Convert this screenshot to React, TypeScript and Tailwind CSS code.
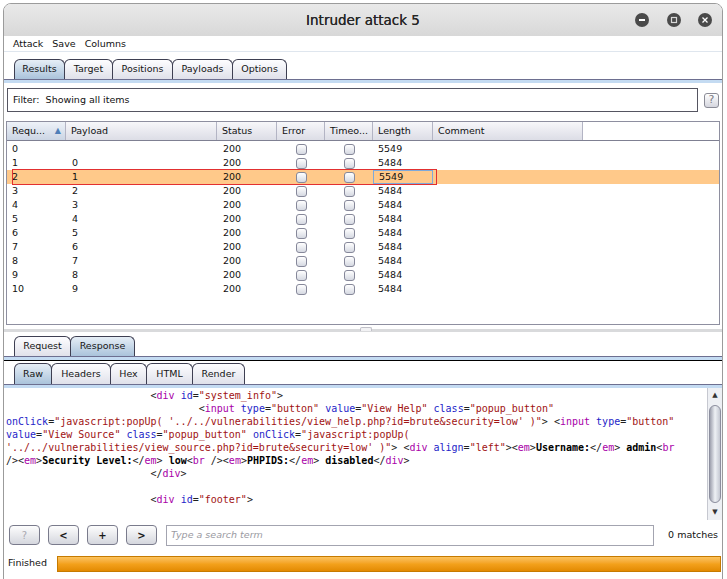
import React from 'react';

type Tok = { t: string; c: string };

const CODE = [
  '                        <div id="system_info">',
  '                                <input type="button" value="View Help" class="popup_button"',
  `onClick="javascript:popUp( '../../vulnerabilities/view_help.php?id=brute&security=low' )"> <input type="button"`,
  `value="View Source" class="popup_button" onClick="javascript:popUp(`,
  `'../../vulnerabilities/view_source.php?id=brute&security=low' )"> <div align="left"><em>Username:</em> admin<br`,
  `/><em>Security Level:</em> low<br /><em>PHPIDS:</em> disabled</div>`,
  '                        </div>',
  '',
  '                        <div id="footer">',
];

const tokColor: Record<string, string> = {
  punct: 'text-[#202020]',
  tag: 'text-[#a800a8]',
  attr: 'text-[#1e1ec8]',
  val: 'text-[#a01212]',
  bold: 'text-black font-bold',
  plain: '',
};

// tiny html colouriser, state carries over line breaks
function tokenize(lines: string[]): Tok[][] {
  let mode: 'text' | 'tagname' | 'attr' | 'value' = 'text';
  let quote = '';
  return lines.map((line) => {
    const out: Tok[] = [];
    const push = (ch: string, c: string) => {
      const last = out[out.length - 1];
      if (last && last.c === c) last.t += ch;
      else out.push({ t: ch, c });
    };
    for (const ch of line) {
      if (mode === 'value') {
        push(ch, 'val');
        if (ch === quote) mode = 'attr';
        continue;
      }
      if (ch === '<') {
        push(ch, 'punct');
        mode = 'tagname';
        continue;
      }
      if (mode === 'text') {
        push(ch, ch === ' ' ? 'plain' : 'bold');
        continue;
      }
      if (ch === '>') {
        push(ch, 'punct');
        mode = 'text';
        continue;
      }
      if (ch === '/') {
        push(ch, 'punct');
        continue;
      }
      if (mode === 'tagname') {
        if (ch === ' ') {
          push(ch, 'plain');
          mode = 'attr';
        } else push(ch, 'tag');
        continue;
      }
      if (ch === '=') {
        push(ch, 'punct');
        continue;
      }
      if (ch === '"' || ch === "'") {
        quote = ch;
        mode = 'value';
        push(ch, 'val');
        continue;
      }
      push(ch, ch === ' ' ? 'plain' : 'attr');
    }
    return out;
  });
}

type TabDef = { label: string; w: string };

const mainTabs: TabDef[] = [
  { label: 'Results', w: 'w-[51px]' },
  { label: 'Target', w: 'w-[49px]' },
  { label: 'Positions', w: 'w-[61px]' },
  { label: 'Payloads', w: 'w-[61px]' },
  { label: 'Options', w: 'w-[55px]' },
];
const msgTabs: TabDef[] = [
  { label: 'Request', w: 'w-[57px]' },
  { label: 'Response', w: 'w-[65px]' },
];
const viewTabs: TabDef[] = [
  { label: 'Raw', w: 'w-[38px]' },
  { label: 'Headers', w: 'w-[60px]' },
  { label: 'Hex', w: 'w-[37px]' },
  { label: 'HTML', w: 'w-[47px]' },
  { label: 'Render', w: 'w-[53px]' },
];

const Tabs = ({ tabs, active, h }: { tabs: TabDef[]; active: number; h: string }) => (
  <div className={`flex items-end pl-[10px] ${h}`}>
    {tabs.map((t, i) => (
      <div
        key={t.label}
        className={`${t.w} h-full -mr-px flex items-center justify-center border border-b-0 border-[#3e3f52] rounded-t-[6px] text-[9.5px] text-[#151515] ${
          i === active
            ? 'bg-linear-to-b from-[#e6eef6] to-[#aac3db]'
            : 'bg-linear-to-b from-[#fdfdff] to-[#e0e1ea]'
        }`}
      >
        {t.label}
      </div>
    ))}
  </div>
);

const Strip = ({ black }: { black?: boolean }) => (
  <div>
    <div className="h-px bg-[#6d6f90]" />
    <div className="h-[3px] bg-[#c4dbf2]" />
    {black && <div className="h-px bg-black" />}
  </div>
);

const Checkbox = () => (
  <div className="w-[11px] h-[11px] rounded-[3px] border border-[#86889a] bg-linear-to-b from-[#ffffff] to-[#d6d9e2]" />
);

const rows = Array.from({ length: 11 }, (_, i) => ({
  req: String(i),
  payload: i === 0 ? '' : String(i - 1),
  status: '200',
  length: i === 0 || i === 2 ? '5549' : '5484',
}));

const cols = 'grid grid-cols-[59px_151px_60px_48px_48px_60px_150px]';

const headers = ['Requ...', 'Payload', 'Status', 'Error', 'Timeo...', 'Length', 'Comment'];

const WinBtn = ({ kind }: { kind: 'min' | 'max' | 'close' }) => (
  <div className="w-[14px] h-[14px] rounded-full bg-[#4a4a4a] flex items-center justify-center">
    <svg width="8" height="8" viewBox="0 0 8 8">
      {kind === 'min' && <rect x="1" y="3" width="6" height="2" fill="#ffffff" />}
      {kind === 'max' && <rect x="1.5" y="1.5" width="5" height="5" fill="none" stroke="#d8d8d8" strokeWidth="1.2" />}
      {kind === 'close' && (
        <path d="M1.5 1.5 L6.5 6.5 M6.5 1.5 L1.5 6.5" stroke="#ffffff" strokeWidth="1.3" />
      )}
    </svg>
  </div>
);

const SmallBtn = ({ label, disabled }: { label: string; disabled?: boolean }) => (
  <div
    className={`w-[31px] h-[20px] rounded-[4px] border border-[#7a7b8c] bg-linear-to-b from-[#fdfdfd] to-[#d5d7de] flex items-center justify-center text-[10px] font-bold ${
      disabled ? 'text-[#a8a8b0] font-normal' : 'text-[#1a1a1a]'
    }`}
  >
    {label}
  </div>
);

export default function App() {
  const code = tokenize(CODE);
  return (
    <div className="w-[727px] h-[579px] overflow-hidden bg-white font-['DejaVu_Sans','Liberation_Sans',sans-serif] text-[#111]">
      <div className="ml-[3px] mt-[3px] w-[720px] h-[577px] border border-[#9b9b9b] rounded-t-[8px] bg-white flex flex-col overflow-hidden">
        {/* title bar */}
        <div className="h-[32px] shrink-0 bg-linear-to-b from-[#e9e9e9] to-[#d8d8d8] relative flex items-center justify-center">
          <span className="text-[13.5px] text-[#262626] [text-shadow:0_0_0.4px_#262626]">Intruder attack 5</span>
          <div className="absolute right-[10px] top-[9px] flex gap-[17.5px]">
            <WinBtn kind="min" />
            <WinBtn kind="max" />
            <WinBtn kind="close" />
          </div>
        </div>

        {/* menu */}
        <div className="h-[16px] shrink-0 border-b border-[#dfe6ee] flex items-center gap-[9px] pl-[9px] pt-[1px] text-[9.5px]">
          <span>Attack</span>
          <span>Save</span>
          <span>Columns</span>
        </div>

        <div className="pt-[7px]">
          <Tabs tabs={mainTabs} active={0} h="h-[20px]" />
          <Strip />
        </div>

        {/* filter */}
        <div className="mt-[5px] flex items-center gap-[6px] pl-[3px] pr-[3px]">
          <div className="flex-1 h-[24px] border border-[#555561] flex items-center pl-[5px] text-[9.5px]">
            Filter:&nbsp; Showing all items
          </div>
          <div className="w-[15px] h-[15px] rounded-[3px] border border-[#8a8b96] bg-linear-to-b from-[#ffffff] to-[#d5d6de] flex items-center justify-center text-[11px] text-[#7c7c84]">
            ?
          </div>
        </div>

        {/* results table */}
        <div className="mt-[9px] ml-[2px] mr-[2px] h-[204px] border border-[#8e8fa0] bg-white">
          <div className={`${cols} h-[19px] border-b border-[#7f8092]`}>
            {headers.map((h, i) => (
              <div
                key={h}
                className={`flex items-center justify-between pl-[5px] pr-[4px] text-[9.5px] border-r border-[#b3b4c4] ${
                  i === 0
                    ? 'bg-linear-to-b from-[#eef2f8] to-[#cbd5e4]'
                    : 'bg-linear-to-b from-[#f7f7fa] to-[#dcdde6]'
                }`}
              >
                <span>{h}</span>
                {i === 0 && <span className="text-[8px] text-[#4f7fb8]">▲</span>}
              </div>
            ))}
          </div>
          <div className="relative pt-px">
            {rows.map((r, i) => (
              <div key={r.req} className={`${cols} h-[14px] text-[9.5px] ${i === 2 ? 'bg-[#ffc98a]' : ''}`}>
                <div className="pl-[5px] leading-[14px]">{r.req}</div>
                <div className="pl-[6px] leading-[14px]">{r.payload}</div>
                <div className="pl-[6px] leading-[14px]">{r.status}</div>
                <div className="flex items-center justify-center">
                  <Checkbox />
                </div>
                <div className="flex items-center justify-center">
                  <Checkbox />
                </div>
                <div
                  className={`pl-[5px] leading-[12px] ${
                    i === 2 ? 'border border-[#7ea9da]' : 'leading-[14px]'
                  }`}
                >
                  {r.length}
                </div>
                <div />
              </div>
            ))}
            <div className="absolute left-[5px] top-[28px] w-[425px] h-[16px] border border-[#e23030]" />
          </div>
        </div>

        {/* splitter */}
        <div className="h-[11px] shrink-0 relative">
          <div className="absolute left-0 right-0 top-[4px] h-[3px] bg-[#d9dadc]" />
          <div className="absolute left-[356px] top-[2px] w-[12px] h-[4px] rounded-t-[2px] border border-b-0 border-[#c0c0c8] bg-[#f2f2f4]" />
        </div>

        <Tabs tabs={msgTabs} active={1} h="h-[20px]" />
        <Strip black />

        <div className="mt-[2px]">
          <Tabs tabs={viewTabs} active={0} h="h-[21px]" />
          <Strip />
        </div>

        {/* response body */}
        <div className="h-[132px] shrink-0 flex">
          <div className="flex-1 pl-[2px] pt-px font-['DejaVu_Sans_Mono','Liberation_Mono',monospace] text-[10px] overflow-hidden">
            {code.map((line, i) => (
              <div key={i} className="h-[13px] leading-[13px] whitespace-pre">
                {line.map((tk, j) => (
                  <span key={j} className={tokColor[tk.c]}>
                    {tk.t}
                  </span>
                ))}
              </div>
            ))}
          </div>
          <div className="w-[15px] flex flex-col bg-[#eef0f4] border-l border-[#c6c8d0]">
            <div className="h-[15px] flex items-center justify-center text-[7px] text-[#333]">▲</div>
            <div className="flex-1 px-[1px] py-[2px]">
              <div className="h-full rounded-[7px] border border-[#8c8e9e] bg-linear-to-r from-[#9ea1ae] via-[#eef1f5] to-[#c4c8d2]" />
            </div>
            <div className="h-[15px] flex items-center justify-center text-[7px] text-[#333]">▼</div>
          </div>
        </div>

        {/* search bar */}
        <div className="h-[28px] shrink-0 flex items-center pl-[5px] pr-[4px] pt-[2px] gap-[8px]">
          <SmallBtn label="?" disabled />
          <SmallBtn label="<" />
          <SmallBtn label="+" />
          <SmallBtn label=">" />
          <div className="ml-[1px] w-[488px] h-[21px] border border-[#a3a4b0] flex items-center pl-[4px] text-[9.5px] italic text-[#9a9aa2]">
            Type a search term
          </div>
          <span className="ml-auto text-[9.5px]">0 matches</span>
        </div>

        {/* status */}
        <div className="h-[28px] shrink-0 flex items-center pl-[4px] pr-[1px] pt-[3px] gap-[10px] text-[9.5px]">
          <span>Finished</span>
          <div className="flex-1 h-[16px] border border-[#c67a00] bg-linear-to-b from-[#fcc35c] via-[#f3a11b] to-[#e38a00]" />
        </div>
      </div>
    </div>
  );
}
